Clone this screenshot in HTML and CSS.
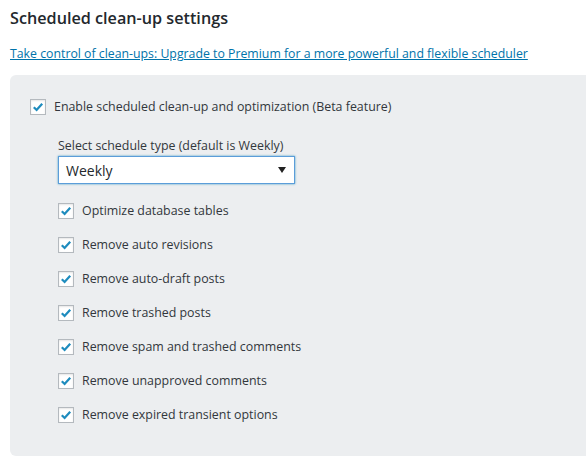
FILE: index.html
```html
<!DOCTYPE html>
<html>
<head>
<meta charset="utf-8">
<link rel="stylesheet" href="styles.css">
</head>
<body>
<div class="page">
  <h2 class="title">Scheduled clean-up settings</h2>
  <p class="promo"><a href="#">Take control of clean-ups: Upgrade to Premium for a more powerful and flexible scheduler</a></p>
  <div class="panel">
    <label class="row main-row"><span class="cb"><svg viewBox="0 0 16 16"><path d="M3.2 8.3 L6.4 11.4 L12.8 4.4" /></svg></span>Enable scheduled clean-up and optimization (Beta feature)</label>
    <div class="sub">
      <div class="select-label">Select schedule type (default is Weekly)</div>
      <div class="select"><span>Weekly</span><span class="arrow"></span></div>
      <div class="list">
        <label class="row"><span class="cb"><svg viewBox="0 0 16 16"><path d="M3.2 8.3 L6.4 11.4 L12.8 4.4" /></svg></span>Optimize database tables</label>
        <label class="row"><span class="cb"><svg viewBox="0 0 16 16"><path d="M3.2 8.3 L6.4 11.4 L12.8 4.4" /></svg></span>Remove auto revisions</label>
        <label class="row"><span class="cb"><svg viewBox="0 0 16 16"><path d="M3.2 8.3 L6.4 11.4 L12.8 4.4" /></svg></span>Remove auto-draft posts</label>
        <label class="row"><span class="cb"><svg viewBox="0 0 16 16"><path d="M3.2 8.3 L6.4 11.4 L12.8 4.4" /></svg></span>Remove trashed posts</label>
        <label class="row"><span class="cb"><svg viewBox="0 0 16 16"><path d="M3.2 8.3 L6.4 11.4 L12.8 4.4" /></svg></span>Remove spam and trashed comments</label>
        <label class="row"><span class="cb"><svg viewBox="0 0 16 16"><path d="M3.2 8.3 L6.4 11.4 L12.8 4.4" /></svg></span>Remove unapproved comments</label>
        <label class="row"><span class="cb"><svg viewBox="0 0 16 16"><path d="M3.2 8.3 L6.4 11.4 L12.8 4.4" /></svg></span>Remove expired transient options</label>
      </div>
    </div>
  </div>
</div>
</body>
</html>
```

FILE: styles.css
```css
html, body {
  margin: 0;
  padding: 0;
  background: #ffffff;
}
body {
  font-family: "Open Sans", "Noto Sans", "Liberation Sans", sans-serif;
  font-size: 12.4px;
  color: #32373c;
}
.page {
  padding: 6px 0 0 10px;
}
.title {
  margin: 0;
  font-size: 16.2px;
  line-height: 24px;
  font-weight: 600;
  color: #23282d;
}
.promo {
  margin: 15px 0 0 0;
  line-height: 18px;
  font-size: 12.3px;
}
.promo a {
  color: #0073aa;
  text-decoration: underline;
}
.panel {
  margin-top: 12px;
  background: #eceef0;
  border-radius: 6px 0 0 6px;
  height: 381px;
  box-sizing: border-box;
  padding: 24px 0 0 20px;
}
.row {
  display: flex;
  align-items: center;
  gap: 8px;
  height: 16px;
  line-height: 16px;
  white-space: nowrap;
}
.cb {
  width: 16px;
  height: 16px;
  box-sizing: border-box;
  border: 1px solid #b4b9be;
  background: #fff;
  box-shadow: inset 0 1px 2px rgba(0,0,0,0.1);
  flex: none;
  display: flex;
}
.cb svg {
  width: 14px;
  height: 14px;
}
.cb path {
  fill: none;
  stroke: #1e8cbe;
  stroke-width: 2.6;
}
.sub {
  padding-left: 28px;
}
.select-label {
  margin-top: 22px;
  line-height: 18px;
}
.select {
  margin-top: 1px;
  width: 237px;
  height: 28px;
  box-sizing: border-box;
  border: 1px solid #5b9dd9;
  box-shadow: 0 0 2px rgba(30,140,190,0.8);
  background: #fff;
  display: flex;
  align-items: center;
  justify-content: space-between;
  padding: 0 8px 0 7px;
  font-size: 14px;
  color: #23282d;
}
.arrow {
  width: 0;
  height: 0;
  border-left: 4px solid transparent;
  border-right: 4px solid transparent;
  border-top: 6px solid #222;
}
.list {
  margin-top: 19px;
  display: flex;
  flex-direction: column;
  gap: 18px;
}
```
